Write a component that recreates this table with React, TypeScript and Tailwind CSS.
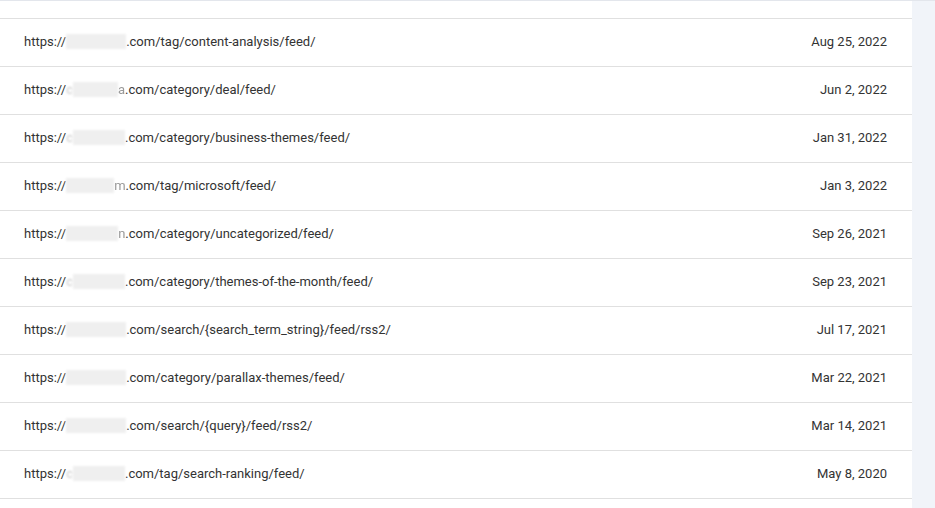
const rows = [
  { pre: "", post: "", w: "w-[60px]", path: ".com/tag/content-analysis/feed/", date: "Aug 25, 2022" },
  { pre: "c", post: "a", w: "w-[45px]", path: ".com/category/deal/feed/", date: "Jun 2, 2022" },
  { pre: "c", post: "", w: "w-[52px]", path: ".com/category/business-themes/feed/", date: "Jan 31, 2022" },
  { pre: "", post: "m", w: "w-[48px]", path: ".com/tag/microsoft/feed/", date: "Jan 3, 2022" },
  { pre: "", post: "n", w: "w-[52px]", path: ".com/category/uncategorized/feed/", date: "Sep 26, 2021" },
  { pre: "c", post: "", w: "w-[52px]", path: ".com/category/themes-of-the-month/feed/", date: "Sep 23, 2021" },
  { pre: "", post: "", w: "w-[60px]", path: ".com/search/{search_term_string}/feed/rss2/", date: "Jul 17, 2021" },
  { pre: "", post: "", w: "w-[60px]", path: ".com/category/parallax-themes/feed/", date: "Mar 22, 2021" },
  { pre: "", post: "", w: "w-[60px]", path: ".com/search/{query}/feed/rss2/", date: "Mar 14, 2021" },
  { pre: "c", post: "", w: "w-[52px]", path: ".com/tag/search-ranking/feed/", date: "May 8, 2020" },
];

// domain is hidden in the screenshot, so draw a soft grey smear in its place
function Blurred({ pre, post, w }: { pre: string; post: string; w: string }) {
  return (
    <span className="inline-flex items-center">
      {pre && <span className="text-[#c8c8c8] blur-[1px]">{pre}</span>}
      <span className={`inline-block h-[15px] bg-[#efefef] blur-[1px] ${w}`} />
      {post && <span className="text-[#9a9a9a] blur-[0.5px]">{post}</span>}
    </span>
  );
}

export default function App() {
  return (
    <div
      className="flex h-[508px] w-[935px] overflow-hidden text-[13px] text-[#333]"
      style={{ fontFamily: "Roboto, 'Liberation Sans', sans-serif" }}
    >
      <div className="w-[912px] bg-white">
        <div className="h-[19px] border-y border-t-[#e3e6ec] border-b-[#e0e0e0]" />
        {rows.map((r) => (
          <div
            key={r.path}
            className="flex h-[48px] items-center justify-between border-b border-[#e0e0e0] pb-[2px] pl-6 pr-[25px]"
          >
            <div className="flex items-center whitespace-nowrap">
              <span>https://</span>
              <Blurred pre={r.pre} post={r.post} w={r.w} />
              <span>{r.path}</span>
            </div>
            <div>{r.date}</div>
          </div>
        ))}
      </div>
      <div className="flex-1 border-t border-[#e3e6ec] bg-[#f1f4f9]" />
    </div>
  );
}
